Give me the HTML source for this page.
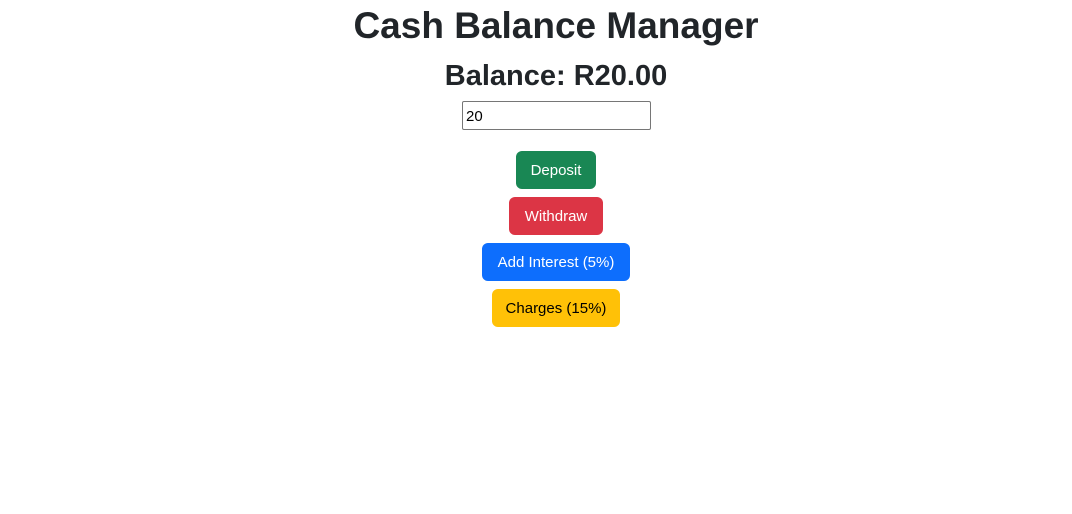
<!DOCTYPE html>
<html><head><meta charset="utf-8"><style>
body{margin:0;width:1072px;height:514px;background:#fff;font-family:"Liberation Sans",sans-serif;color:#212529;position:relative;overflow:hidden}
.c{position:absolute;left:0;width:1112px;text-align:center}
h1{margin:0;font-size:37px;font-weight:700;top:4px;line-height:44px}
h2{margin:0;font-size:29px;font-weight:700;top:57px;line-height:38px}
input{position:absolute;left:462px;top:101px;width:189px;height:29px;box-sizing:border-box;border:1px solid #767676;border-radius:2px;font-family:"Liberation Sans",sans-serif;font-size:15px;padding:2px 3px 0;color:#000}
.b{position:absolute;height:38px;border-radius:6px;color:#fff;font-size:15px;line-height:40px;text-align:center;box-sizing:border-box}
</style></head><body>
<h1 class="c">Cash Balance Manager</h1>
<h2 class="c">Balance: R20.00</h2>
<input value="20">
<div class="b" style="left:516px;top:151px;width:80px;background:#198754">Deposit</div>
<div class="b" style="left:509px;top:197px;width:94px;background:#dc3545">Withdraw</div>
<div class="b" style="left:482px;top:243px;width:148px;background:#0d6efd">Add Interest (5%)</div>
<div class="b" style="left:492px;top:289px;width:128px;background:#ffc107;color:#000">Charges (15%)</div>
</body></html>
